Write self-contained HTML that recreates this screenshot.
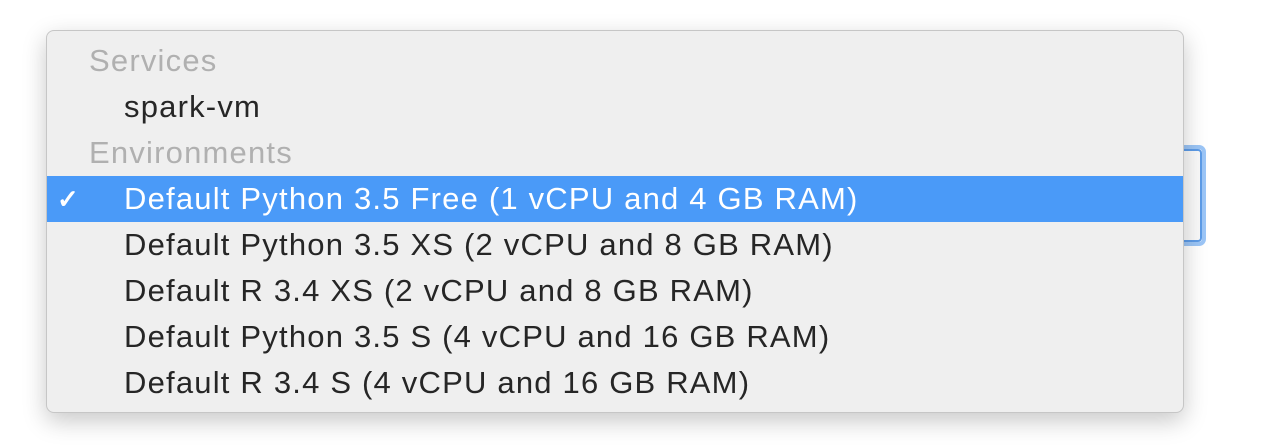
<!DOCTYPE html>
<html><head><style>
body{margin:0;width:1264px;height:448px;background:#fff;position:relative;overflow:hidden;font-family:"Liberation Sans",sans-serif;}
.ring{position:absolute;left:1150px;top:145px;width:56px;height:101px;border:4px solid #9cc6f7;border-radius:7px;box-sizing:border-box}
.ring2{position:absolute;left:1150px;top:149px;width:52px;height:93px;border:2px solid #5d9ce8;border-radius:4px;box-sizing:border-box;background:#fafafa}
.menu{position:absolute;left:46px;top:30px;width:1138px;height:383px;background:#efefef;border:1px solid #c6c6c6;border-radius:8px;box-sizing:border-box;box-shadow:0 8px 24px rgba(0,0,0,.22);overflow:hidden}
.row{position:absolute;left:0;width:100%;height:46px;line-height:46px;font-size:31px;letter-spacing:1.2px;color:#262626;}
.h{color:#b0b0b0;padding-left:42px}
.i{padding-left:77px}
.sel{background:#4a9af8;color:#fff}
.chk{position:absolute;left:10px;font-size:26px;font-weight:bold}
</style></head><body>
<div class="ring"></div><div class="ring2"></div>
<div class="menu">
<div class="row h" style="top:7px">Services</div>
<div class="row i" style="top:53px">spark-vm</div>
<div class="row h" style="top:99px">Environments</div>
<div class="row i sel" style="top:145px"><span class="chk">✓</span>Default Python 3.5 Free (1 vCPU and 4 GB RAM)</div>
<div class="row i" style="top:191px">Default Python 3.5 XS (2 vCPU and 8 GB RAM)</div>
<div class="row i" style="top:237px">Default R 3.4 XS (2 vCPU and 8 GB RAM)</div>
<div class="row i" style="top:283px">Default Python 3.5 S (4 vCPU and 16 GB RAM)</div>
<div class="row i" style="top:329px">Default R 3.4 S (4 vCPU and 16 GB RAM)</div>
</div>
</body></html>
